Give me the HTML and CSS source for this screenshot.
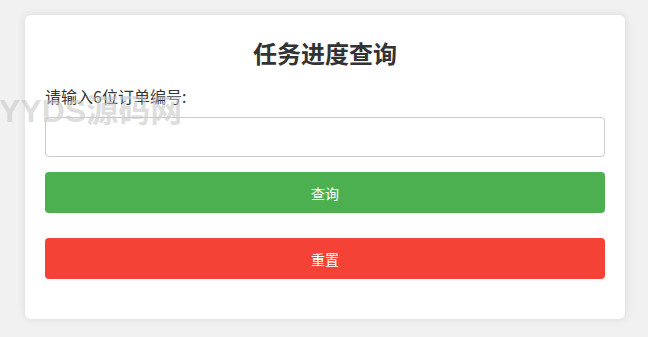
FILE: index.html
```html
<!DOCTYPE html>
<html lang="zh-CN">
<head>
    <meta charset="UTF-8">
    <meta name="viewport" content="width=device-width, initial-scale=1.0">
    <title>任务进度查询</title>
    <link rel="stylesheet" href="styles.css">
</head>
<body>
    <div class="container">
        <h2 class="title">任务进度查询</h2>
        <label class="field-label" for="orderId">请输入6位订单编号:</label>
        <input class="field-input" type="text" id="orderId">
        <button class="btn btn-query">查询</button>
        <button class="btn btn-reset">重置</button>
    </div>
    <div class="watermark">YYDS源码网</div>
</body>
</html>
```

FILE: styles.css
```css
* {
    margin: 0;
    padding: 0;
    box-sizing: border-box;
}
body {
    font-family: "Noto Sans CJK SC", "Liberation Sans", sans-serif;
    background: #f1f1f1;
    color: #333;
    padding: 15px 0 18px 25px;
}
.container {
    width: 600px;
    background: #fff;
    border-radius: 6px;
    box-shadow: 0 0 10px rgba(0, 0, 0, 0.1);
    padding: 20px 20px 40px;
    display: flex;
    flex-direction: column;
}
.title {
    font-size: 24px;
    font-weight: 700;
    text-align: center;
    line-height: 35px;
    margin-bottom: 15px;
}
.field-label {
    font-size: 16px;
    line-height: 23px;
    margin-bottom: 9px;
}
.field-input {
    height: 40px;
    border: 1px solid #ccc;
    border-radius: 4px;
    font-size: 16px;
    padding: 0 10px;
}
.btn {
    height: 41px;
    border: none;
    border-radius: 4px;
    color: #fff;
    font-size: 14px;
    font-family: inherit;
    cursor: pointer;
}
.btn-query {
    background: #4caf50;
    margin-top: 15px;
}
.btn-reset {
    background: #f44336;
    margin-top: 25px;
}
.watermark {
    position: absolute;
    left: -1px;
    top: 85px;
    font-family: "Liberation Sans", "Noto Sans CJK SC", sans-serif;
    font-size: 32px;
    font-weight: 700;
    color: rgba(200, 200, 200, 0.6);
    pointer-events: none;
}
```
